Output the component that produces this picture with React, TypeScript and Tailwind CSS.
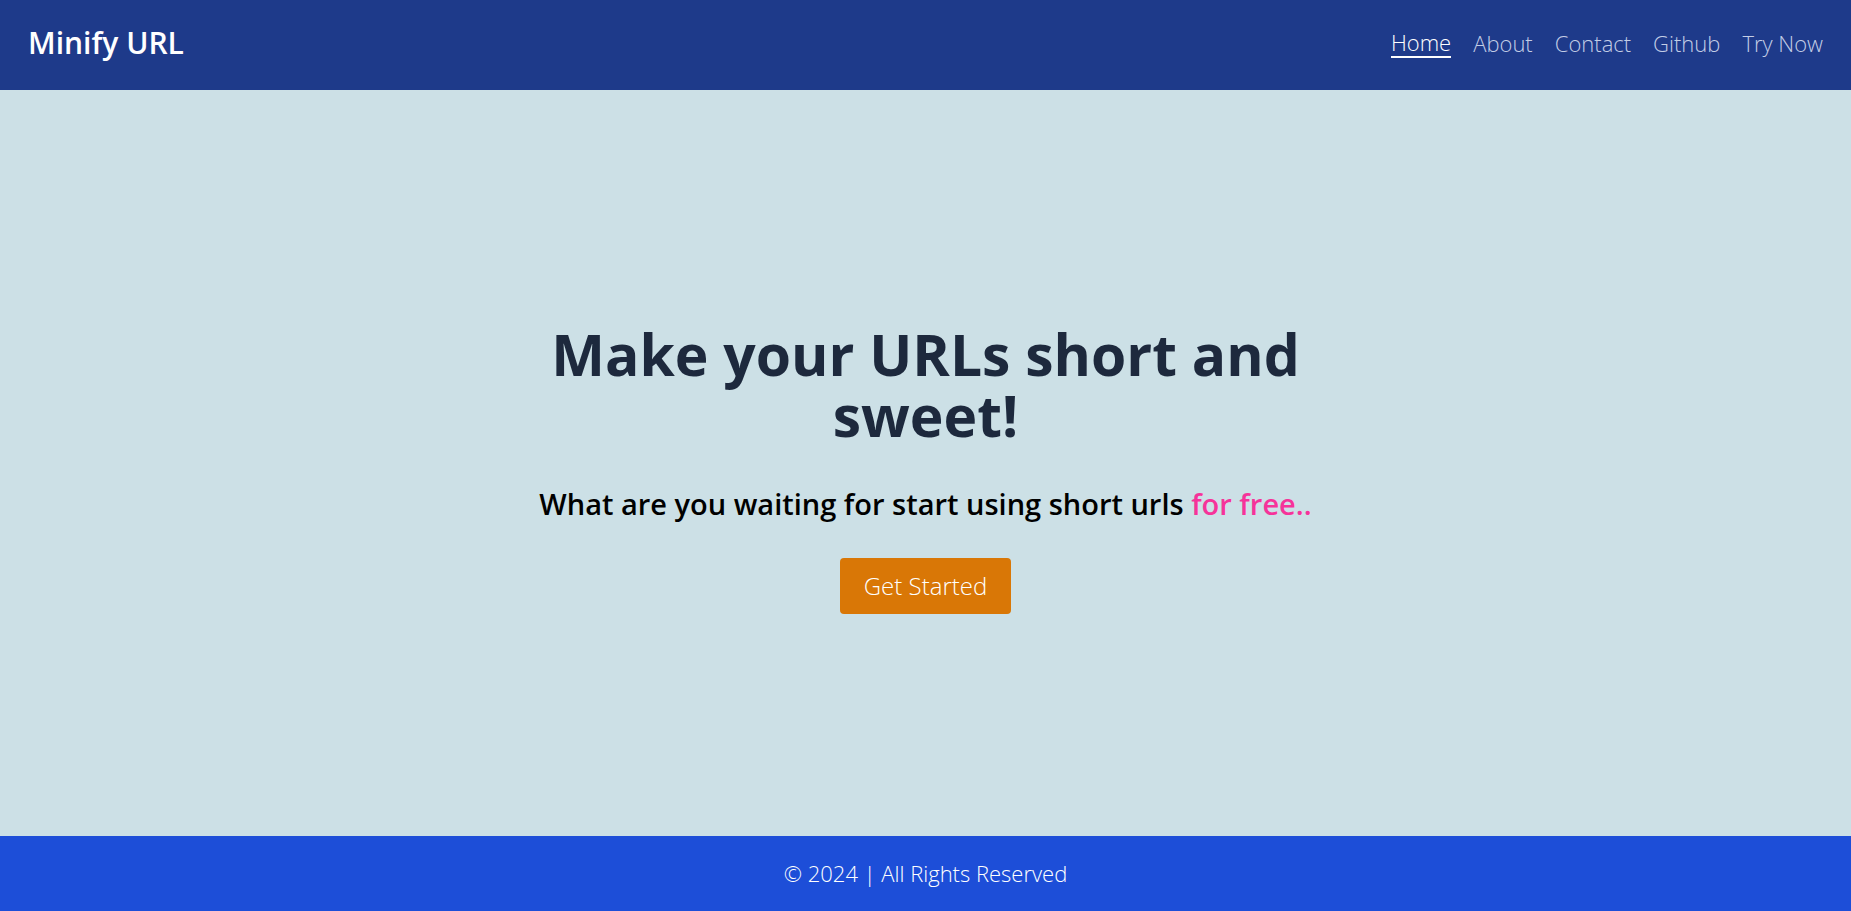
import React from 'react';

const links = ['Home', 'About', 'Contact', 'Github', 'Try Now'];

export default function App() {
  return (
    <div className="flex min-h-screen flex-col bg-[#cce0e6] font-['Open_Sans',sans-serif]">
      {/* Navbar */}
      <header className="flex h-[90px] items-center justify-between bg-[#1e3a8a] px-7 pb-[5px]">
        <h1 className="text-3xl font-semibold text-white">Minify URL</h1>
        <nav className="flex items-center gap-[22px]">
          {links.map((link, i) => (
            <a
              key={link}
              href="#"
              className={`text-[22px] leading-7 font-light ${i === 0 ? 'border-b-2 border-white text-white' : 'text-[#c3cde6]'}`}
            >
              {link}
            </a>
          ))}
        </nav>
      </header>

      {/* Hero */}
      <main className="flex flex-1 flex-col items-center justify-center px-4 pt-[12px] text-center">
        <h2 className="max-w-4xl text-[57px] leading-[61px] font-bold text-slate-800">Make your URLs short and sweet!</h2>
        <p className="mt-10 text-[29px] leading-9 font-semibold text-black">
          What are you waiting for start using short urls <span className="text-pink-500">for free..</span>
        </p>
        <button className="mt-9 rounded bg-[#d97706] px-6 py-3 text-2xl font-light text-white">Get Started</button>
      </main>

      {/* Footer */}
      <footer className="flex h-[75px] items-center justify-center bg-[#1d4ed8]">
        <p className="text-[22px] font-light text-white">© 2024 | All Rights Reserved</p>
      </footer>
    </div>
  );
}
